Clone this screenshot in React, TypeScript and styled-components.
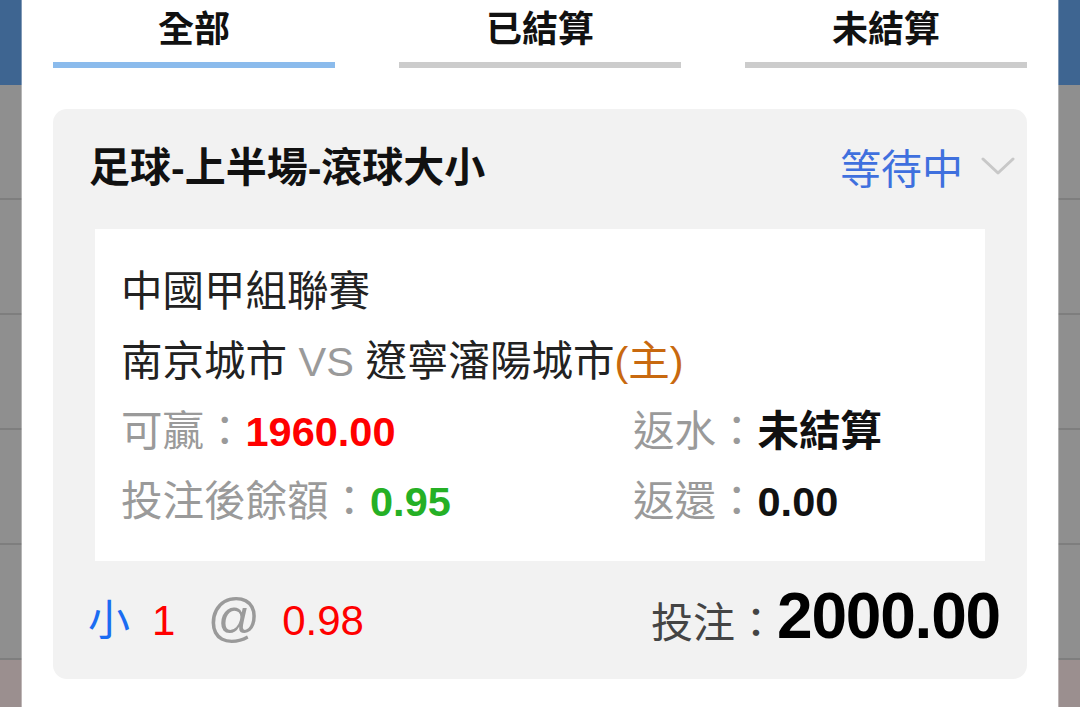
import React from 'react';
import styled, { createGlobalStyle } from 'styled-components';

const GlobalStyle = createGlobalStyle`
  html, body {
    margin: 0;
    padding: 0;
    width: 1080px;
    height: 707px;
    overflow: hidden;
  }
  body {
    font-family: "Liberation Sans", "Noto Sans CJK TC", sans-serif;
    background: #8f8f8f;
  }
`;

const Screen = styled.div`
  position: relative;
  width: 1080px;
  height: 707px;
  overflow: hidden;
`;

const Backdrop = styled.div`
  display: flex;
  flex-direction: column;
  height: 100%;
`;

const BackdropHeader = styled.div`
  flex: none;
  height: 85px;
  background: #3e6591;
`;

const BackdropRow = styled.div`
  flex: none;
  height: 113px;
  background: #8f8f8f;
  border-bottom: 2px solid #7e7e7e;
`;

const BackdropFooter = styled.div`
  flex: 1;
  background: #9b8f8f;
`;

const Sheet = styled.div`
  position: absolute;
  top: 0;
  bottom: 0;
  left: 22px;
  width: 1036px;
  box-sizing: border-box;
  padding: 0 31px;
  background: #ffffff;
  box-shadow: 0 0 0 1px rgba(255, 255, 255, 0.35);
  display: flex;
  flex-direction: column;
`;

const Tabs = styled.div`
  display: grid;
  grid-template-columns: repeat(3, 1fr);
  column-gap: 64px;
`;

const Tab = styled.div`
  display: flex;
  flex-direction: column;
  align-items: center;
`;

const TabLabel = styled.span`
  font-family: "Noto Sans CJK TC", sans-serif;
  font-size: 36px;
  line-height: 52px;
  font-weight: 700;
  color: #111111;
`;

const TabBar = styled.div<{ $active?: boolean }>`
  align-self: stretch;
  height: 6px;
  margin-top: 10px;
  background: ${(p) => (p.$active ? '#8bbbec' : '#cccccc')};
`;

const Card = styled.div`
  margin-top: 41px;
  background: #f2f2f2;
  border-radius: 14px;
  display: flex;
  flex-direction: column;
`;

const CardHeader = styled.div`
  height: 120px;
  display: flex;
  align-items: center;
  justify-content: space-between;
  padding: 0 12px 0 36px;
`;

const Title = styled.h2`
  margin: 0;
  font-size: 41px;
  line-height: 1;
  font-weight: 700;
  color: #111111;
  transform: translateY(-1px);
`;

const Status = styled.div`
  display: flex;
  align-items: center;
  gap: 18px;
  font-family: "Noto Sans CJK TC", sans-serif;
  font-size: 41px;
  color: #3f70de;
  transform: translateY(-3px);
`;

const Detail = styled.div`
  margin: 0 42px;
  background: #ffffff;
  padding: 28px 26px 24px;
  font-size: 41.5px;
  line-height: 70px;
  color: #222222;
`;

const Line = styled.div`
  white-space: nowrap;
`;

const Vs = styled.span`
  color: #9a9a9a;
`;

const Home = styled.span`
  color: #c8690f;
`;

const Stats = styled.div`
  display: grid;
  grid-template-columns: 512px 1fr;
`;

const Stat = styled.div`
  white-space: nowrap;
`;

const Label = styled.span`
  color: #9a9a9a;
`;

const Value = styled.span<{ $color?: string }>`
  font-weight: 700;
  color: ${(p) => p.$color || '#111111'};
`;

const Footer = styled.div`
  height: 118px;
  box-sizing: border-box;
  display: flex;
  align-items: center;
  justify-content: space-between;
  padding: 0 27px 8px 35px;
  font-size: 42px;
`;

const Pick = styled.div`
  display: flex;
  align-items: baseline;
`;

const PickPart = styled.span<{ $color: string; $gap?: number; $size?: number }>`
  color: ${(p) => p.$color};
  margin-left: ${(p) => p.$gap ?? 0}px;
  font-size: ${(p) => p.$size ?? 42}px;
`;

const Stake = styled.div`
  display: flex;
  align-items: baseline;
`;

const StakeLabel = styled.span`
  color: #444444;
`;

const StakeValue = styled.span`
  font-size: 64px;
  letter-spacing: -1.2px;
  font-weight: 700;
  color: #000000;
`;

const Chevron = () => (
  <svg width="34" height="18" viewBox="0 0 34 18" fill="none">
    <polyline points="2,2 17,16 32,2" stroke="#c8c8c8" strokeWidth="3" strokeLinecap="round" strokeLinejoin="round" />
  </svg>
);

export default function App() {
  return (
    <>
      <GlobalStyle />
      <Screen>
        <Backdrop>
          <BackdropHeader />
          <BackdropRow />
          <BackdropRow />
          <BackdropRow />
          <BackdropRow />
          <BackdropRow />
          <BackdropFooter />
        </Backdrop>
        <Sheet>
          <Tabs>
            <Tab>
              <TabLabel>全部</TabLabel>
              <TabBar $active />
            </Tab>
            <Tab>
              <TabLabel>已結算</TabLabel>
              <TabBar />
            </Tab>
            <Tab>
              <TabLabel>未結算</TabLabel>
              <TabBar />
            </Tab>
          </Tabs>
          <Card>
            <CardHeader>
              <Title>足球-上半場-滾球大小</Title>
              <Status>
                等待中
                <Chevron />
              </Status>
            </CardHeader>
            <Detail>
              <Line>中國甲組聯賽</Line>
              <Line>
                南京城市 <Vs>VS</Vs> 遼寧瀋陽城市<Home>(主)</Home>
              </Line>
              <Stats>
                <Stat>
                  <Label>可贏：</Label>
                  <Value $color="#ff0000">1960.00</Value>
                </Stat>
                <Stat>
                  <Label>返水：</Label>
                  <Value>未結算</Value>
                </Stat>
                <Stat>
                  <Label>投注後餘額：</Label>
                  <Value $color="#25b025">0.95</Value>
                </Stat>
                <Stat>
                  <Label>返還：</Label>
                  <Value>0.00</Value>
                </Stat>
              </Stats>
            </Detail>
            <Footer>
              <Pick>
                <PickPart $color="#1b6cf2">小</PickPart>
                <PickPart $color="#ff0000" $gap={22}>1</PickPart>
                <PickPart $color="#9a9a9a" $gap={32} $size={52}>@</PickPart>
                <PickPart $color="#ff0000" $gap={22}>0.98</PickPart>
              </Pick>
              <Stake>
                <StakeLabel>投注：</StakeLabel>
                <StakeValue>2000.00</StakeValue>
              </Stake>
            </Footer>
          </Card>
        </Sheet>
      </Screen>
    </>
  );
}
